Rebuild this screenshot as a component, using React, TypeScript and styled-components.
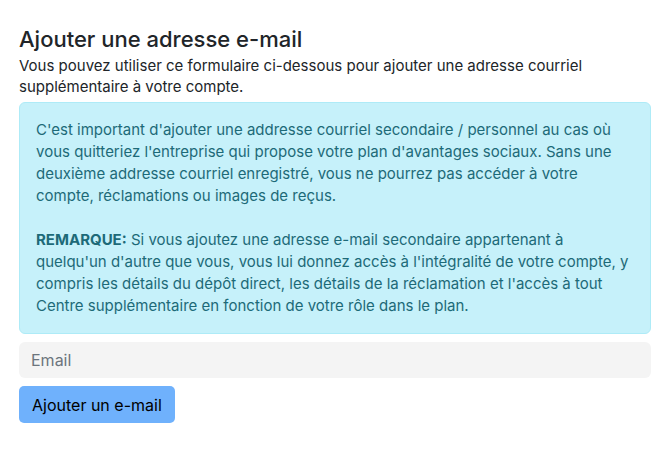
import React from 'react';
import styled, { createGlobalStyle } from 'styled-components';

const GlobalStyle = createGlobalStyle`
  html, body {
    margin: 0;
    padding: 0;
    background: #fff;
  }
  body {
    font-family: Inter, 'Noto Sans', sans-serif;
    color: #212529;
  }
`;

const Page = styled.div`
  padding: 26px 16px 0 19px;
`;

const Title = styled.h2`
  margin: 0 0 3px;
  font-size: 22px;
  font-weight: 500;
  line-height: 26px;
  color: #212529;
`;

const Lead = styled.p`
  margin: 0 0 5px;
  font-size: 15px;
  line-height: 21px;
  color: #212529;
`;

const Alert = styled.div`
  padding: 16px;
  background: #c6f1fa;
  border: 1px solid #aeebf7;
  border-radius: 6px;
  color: #1d6a78;
  font-size: 15px;
  line-height: 22px;
`;

const AlertText = styled.p`
  margin: 0;
  & + & {
    margin-top: 22px;
  }
`;

const Strong = styled.strong`
  font-weight: 700;
`;

const Form = styled.form`
  display: flex;
  flex-direction: column;
  align-items: flex-start;
  gap: 8px;
  margin-top: 8px;
`;

const Input = styled.input`
  box-sizing: border-box;
  width: 100%;
  height: 36px;
  padding: 0 12px;
  border: none;
  border-radius: 6px;
  background: #f4f4f4;
  font-family: inherit;
  font-size: 16px;
  color: #212529;
  outline: none;
  &::placeholder {
    color: #6c757d;
  }
`;

const Button = styled.button`
  height: 37px;
  padding: 0 13px;
  border: none;
  border-radius: 5px;
  background: #6fb1fc;
  font-family: inherit;
  font-size: 16px;
  color: #000;
  cursor: pointer;
`;

export default function App() {
  return (
    <Page>
      <GlobalStyle />
      <Title>Ajouter une adresse e-mail</Title>
      <Lead>
        Vous pouvez utiliser ce formulaire ci-dessous pour ajouter une adresse courriel
        supplémentaire à votre compte.
      </Lead>
      <Alert>
        <AlertText>
          C'est important d'ajouter une addresse courriel secondaire / personnel au cas où
          vous quitteriez l'entreprise qui propose votre plan d'avantages sociaux. Sans une
          deuxième addresse courriel enregistré, vous ne pourrez pas accéder à votre
          compte, réclamations ou images de reçus.
        </AlertText>
        <AlertText>
          <Strong>REMARQUE:</Strong> Si vous ajoutez une adresse e-mail secondaire appartenant à
          quelqu'un d'autre que vous, vous lui donnez accès à l'intégralité de votre compte, y
          compris les détails du dépôt direct, les détails de la réclamation et l'accès à tout
          Centre supplémentaire en fonction de votre rôle dans le plan.
        </AlertText>
      </Alert>
      <Form onSubmit={e => e.preventDefault()}>
        <Input type="email" placeholder="Email" />
        <Button type="submit">Ajouter un e-mail</Button>
      </Form>
    </Page>
  );
}
